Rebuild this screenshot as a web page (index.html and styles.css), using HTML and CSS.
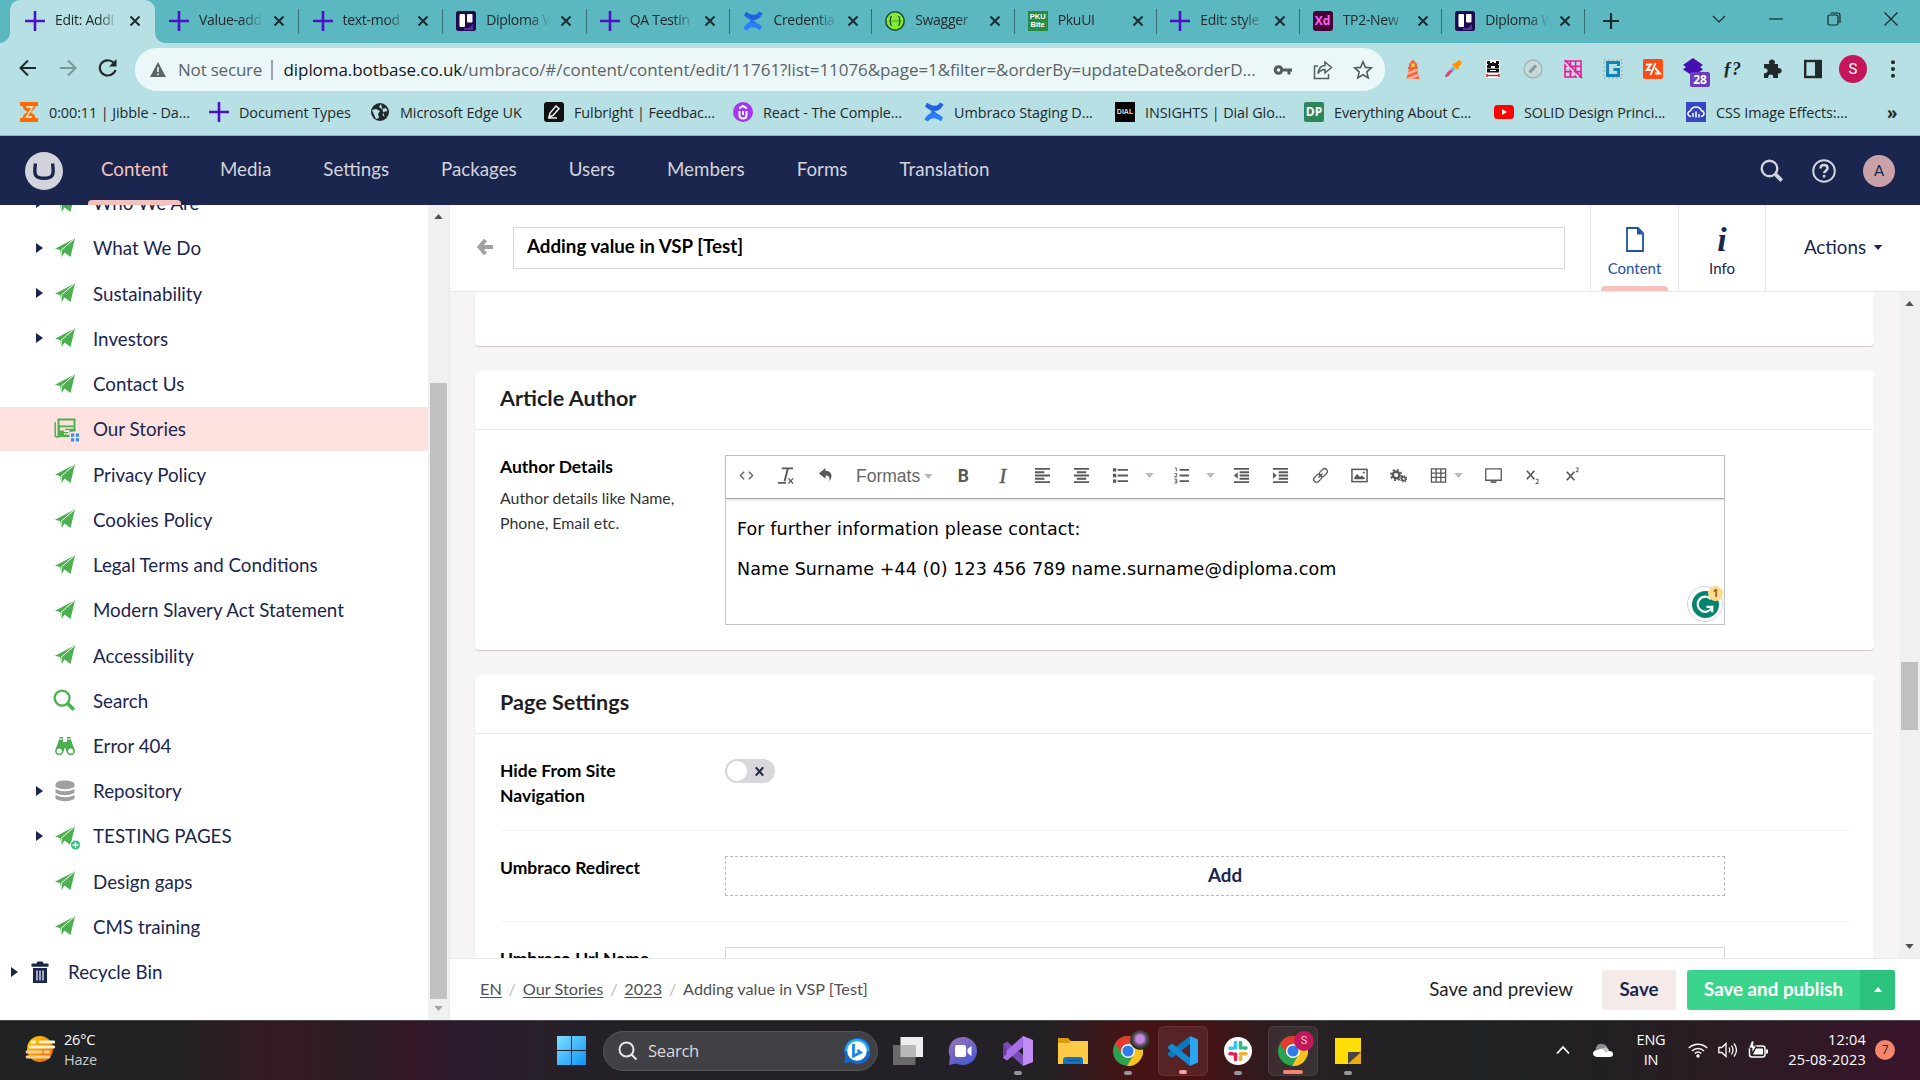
FILE: index.html
```html
<!DOCTYPE html>
<html lang="en">
<head>
<meta charset="utf-8">
<title>Edit: Adding value in VSP [Test]</title>
<link rel="stylesheet" href="styles.css">
</head>
<body>
<svg class="defs" aria-hidden="true">
  <symbol id="plus-logo" viewBox="0 0 20 20"><path d="M10 0v20M0 10h20" stroke="#4b12c4" stroke-width="2.6"/></symbol>
  <symbol id="x" viewBox="0 0 12 12"><path d="M1.5 1.5l9 9M10.500 1.500l-9 9" stroke="#1b2c30" stroke-width="2"/></symbol>
  <symbol id="trello" viewBox="0 0 20 20"><rect width="20" height="20" rx="2.500" fill="#1d0b4e"/><path d="M8 17l5 0 4-4v6H8z" fill="#5b2a93"/><rect x="3.500" y="3" width="5.500" height="13" rx="1" fill="#fff"/><rect x="11" y="3" width="5.500" height="8.500" rx="1" fill="#fff"/></symbol>
  <symbol id="confluence" viewBox="0 0 20 20"><path d="M1 4.500L3 .8c3 1.800 5 3 7.500 3S15 2.500 16 .5l3.500 1.700c-2 4.500-4.500 6.800-9 6.800-3.500 0-6.500-2-9.500-4.500z" fill="#1f63e0"/><path d="M19 15.500l-2 3.700c-3-1.800-5-3-7.500-3S5 17.500 4 19.500L.5 17.800C2.500 13.300 5 11 9.500 11c3.500 0 6.500 2 9.500 4.500z" fill="#2b7cff"/><path d="M5 6c4 2 7 4 10 8-4-3-7-3-10-1 3-2 3-4 0-7z" fill="#2770f0"/></symbol>
  <symbol id="plane" viewBox="0 0 22 22"><path d="M1 11.800L21 1.200 9.200 13.800 7.300 20.500 6 13z" fill="#4caf50"/><path d="M21 1.200L16.500 20l-6-4.500-3.200 5L8.500 14z" fill="#4caf50"/><path d="M20 2L7.200 13.200l-.2 7" stroke="#fff" stroke-width="1" fill="none"/></symbol>
  <symbol id="mag" viewBox="0 0 24 24"><circle cx="9.500" cy="9.500" r="7.800" fill="none" stroke="currentColor" stroke-width="2.400"/><path d="M15 15l2-1 6 6.300-2.600 2.600-6-6z" fill="currentColor"/></symbol>
  <symbol id="chrome" viewBox="0 0 30 30"><circle cx="15" cy="15" r="15" fill="#2ba24c"/><path d="M2 7.500A15 15 0 0 1 28 7.500L15 8.500 9 18z" fill="#e33b2e"/><path d="M28 7.500A15 15 0 0 1 14 30l7-12 0-8.500L15 7.500z" fill="#fcc31e"/><circle cx="15" cy="15" r="7" fill="#fff"/><circle cx="15" cy="15" r="5.600" fill="#2f7bea"/></symbol>
  <symbol id="caret" viewBox="0 0 10 6"><path d="M0 0h10L5 6z" fill="currentColor"/></symbol>
</svg>

<header class="browser">
  <div class="tabstrip">
    <div class="tab active"><svg class="fav"><use href="#plus-logo"/></svg><span>Edit: Addi</span><svg class="cl"><use href="#x"/></svg></div>
    <div class="tab"><svg class="fav"><use href="#plus-logo"/></svg><span>Value-add</span><svg class="cl"><use href="#x"/></svg></div>
    <div class="tab"><svg class="fav"><use href="#plus-logo"/></svg><span>text-mod</span><svg class="cl"><use href="#x"/></svg></div>
    <div class="tab"><svg class="fav"><use href="#trello"/></svg><span>Diploma W</span><svg class="cl"><use href="#x"/></svg></div>
    <div class="tab"><svg class="fav"><use href="#plus-logo"/></svg><span>QA Testin</span><svg class="cl"><use href="#x"/></svg></div>
    <div class="tab sixth"><svg class="fav"><use href="#confluence"/></svg><span>Credentia</span><svg class="cl"><use href="#x"/></svg></div>
    <div class="tab late"><svg class="fav" viewBox="0 0 20 20"><circle cx="10" cy="10" r="9.200" fill="#85ea2d" stroke="#1c4a3a" stroke-width="1.500"/><path d="M7 5.500q-2 0-1.500 2.500T4 10q2 0 1.500 2T7 14.500M13 5.500q2 0 1.500 2.500T16 10q-2 0-1.500 2t-1.500 2.500M7.500 10h1M9.500 10h1M11.500 10h1" fill="none" stroke="#1c4a3a" stroke-width="1.200"/></svg><span>Swagger</span><svg class="cl"><use href="#x"/></svg></div>
    <div class="tab late"><i class="fav pku">PKU<br>Bite</i><span>PkuUI</span><svg class="cl"><use href="#x"/></svg></div>
    <div class="tab late"><svg class="fav"><use href="#plus-logo"/></svg><span>Edit: style</span><svg class="cl"><use href="#x"/></svg></div>
    <div class="tab late"><i class="fav xd">Xd</i><span>TP2-New</span><svg class="cl"><use href="#x"/></svg></div>
    <div class="tab late"><svg class="fav"><use href="#trello"/></svg><span>Diploma W</span><svg class="cl"><use href="#x"/></svg></div>
    <svg class="newtab" viewBox="0 0 16 16"><path d="M8 0v16M0 8h16" stroke="#1b2c30" stroke-width="2.200"/></svg>
    <div class="winctl">
      <svg viewBox="0 0 14 14"><path d="M1 4l6 6 6-6"/></svg>
      <svg viewBox="0 0 14 14"><path d="M0 7h14"/></svg>
      <svg viewBox="0 0 14 14"><rect x="1" y="3" width="10" height="10" rx="1.500"/><path d="M3.500 1H11q2 0 2 2v8"/></svg>
      <svg viewBox="0 0 14 14"><path d="M.5.5l13 13M13.500.5l-13 13"/></svg>
    </div>
  </div>

  <div class="toolbar">
    <div class="nav">
      <svg viewBox="0 0 20 20"><path d="M18 10H3M10 2.500L2.500 10l7.500 7.500" fill="none" stroke="#22292b" stroke-width="2"/></svg>
      <svg viewBox="0 0 20 20" class="dim"><path d="M2 10h15M10 2.500l7.500 7.500-7.500 7.500" fill="none" stroke="#22292b" stroke-width="2"/></svg>
      <svg viewBox="0 0 20 20"><path d="M17.500 12A8 7.600 0 1 1 15.500 4.500" fill="none" stroke="#22292b" stroke-width="2.200"/><path d="M18.500 1v7.500H11z" fill="#22292b"/></svg>
    </div>
    <div class="omnibox">
      <svg class="warn" viewBox="0 0 16 15"><path d="M8 0l8 15H0z" fill="#5b6467"/><path d="M8 5v5M8 11.500v1.700" stroke="#ebf7f8" stroke-width="1.600"/></svg>
      <span class="ns">Not secure</span><i class="bar"></i>
      <span class="url"><b>diploma.botbase.co.uk</b>/umbraco/#/content/content/edit/11761?list=11076&amp;page=1&amp;filter=&amp;orderBy=updateDate&amp;orderD...</span>
      <div class="oi">
        <svg viewBox="0 0 20 20"><circle cx="5.500" cy="10" r="3.300" fill="none" stroke="#545c5f" stroke-width="3"/><path d="M9 10h10M16 10v4.500" stroke="#545c5f" stroke-width="3"/></svg>
        <svg viewBox="0 0 20 20"><path d="M5 6H1.500v12.500h14V14M12 2l6.500 5.500L12 13V9.500c-3 0-5 1-7 4 .5-5 3-7.800 7-8z" fill="none" stroke="#545c5f" stroke-width="1.500"/></svg>
        <svg viewBox="0 0 20 20"><path d="M10 1.800l2.400 5.600 6 .5-4.600 4 1.400 6L10 14.700 4.800 17.900l1.400-6-4.600-4 6-.5z" fill="none" stroke="#545c5f" stroke-width="1.600"/></svg>
      </div>
    </div>
    <div class="exts">
      <svg viewBox="0 0 20 20"><path d="M6 5l4-4.500L14 5v3h1v2h-1l2.500 10h-13L6 10H5V8h1z" fill="#f4633a"/><rect x="8.500" y="4.500" width="3" height="3.500" fill="#ffe14d"/><path d="M5.500 13l8-3.500.6 2.500-9.400 4zM4 19l11-4.500.6 2.500-6 3H4z" fill="#ffb199"/></svg>
      <svg viewBox="0 0 20 20"><path d="M2 18l1.500-4L10 7.500l2.500 2.500L6 16.500z" fill="#6fb7e8"/><path d="M2 18l1-3 3.500 1.800z" fill="#e0265e"/><path d="M4 14l3-3 3 1-5 5z" fill="#ef3d78"/><path d="M9 5.500l1.500-1.500 1 .8L14.500 2q2-1.500 3.500 0t0 3.500L15 8.500l.8 1L14.500 11z" fill="#ff9500"/></svg>
      <svg viewBox="0 0 20 20"><rect x="3" y="1" width="14" height="18" fill="#fff"/><path d="M4 2h3v2h2V3h2v1h2V2h3v3h-1v1h1v3h-4V7H8v2H4V6h1V5H4zM4 9.500h12v4H4z" fill="#111"/><path d="M7 11.500h6" stroke="#fff"/><path d="M4 16.500h12M4 15v3M16 15v3" stroke="#e21b1b" stroke-width="1.500"/></svg>
      <svg viewBox="0 0 20 20"><circle cx="10" cy="10" r="9" fill="#c5dadd" stroke="#9fb4b8" stroke-width="1.400"/><path d="M6.500 13.500l6.500-7" stroke="#8b979a" stroke-width="3"/></svg>
      <svg viewBox="0 0 20 20"><path d="M2 2h16v16H2zM2 7.300h16M2 12.600h16M7.300 2v16M12.600 2v16" fill="none" stroke="#f0189a" stroke-width="1.600"/><path d="M1 3l15 16" stroke="#b7e0e4" stroke-width="1.500"/><path d="M2 1l17 18" stroke="#f0189a" stroke-width="1.800"/></svg>
      <svg viewBox="0 0 20 20"><path d="M1 1h18v18H1z" fill="none" stroke="#9aa7ad" stroke-dasharray="2 2"/><path d="M15.500 7V3.500H4.500v13h11v-6h-5" fill="none" stroke="#1683b5" stroke-width="3"/></svg>
      <svg viewBox="0 0 20 20"><rect width="20" height="20" rx="2" fill="#ff4a11"/><path d="M3 5.500h5L3.500 11H8M12.500 4l-5 12M12 9l5 5.500h-5" fill="none" stroke="#fff" stroke-width="1.900"/></svg>
      <div class="bdg"><svg viewBox="0 0 20 20"><path d="M10 0l10 7-3 2 3 2.500L10 18 0 11.500 3 9 0 7z" fill="#4510b2"/></svg><em>28</em></div>
      <span class="fq">ƒ?</span>
      <svg viewBox="0 0 20 20"><path d="M1 5h5.500a3 2.800 0 1 1 4.800 0H15v4.300a2.700 2.700 0 1 1 0 5V19h-5a2.500 2.500 0 1 0-4.500 0H1v-5a2.500 2.500 0 1 0 0-4.500z" fill="#22292b"/></svg>
      <svg viewBox="0 0 20 20"><rect x="2.200" y="2" width="15.600" height="16" fill="none" stroke="#22292b" stroke-width="2.400"/><path d="M12 2h6v16h-6z" fill="#22292b"/></svg>
      <i class="me">S</i>
      <svg viewBox="0 0 20 20"><g fill="#22292b"><circle cx="10" cy="3.300" r="2"/><circle cx="10" cy="10" r="2"/><circle cx="10" cy="16.700" r="2"/></g></svg>
    </div>
  </div>

  <div class="bookmarks">
    <div><svg viewBox="0 0 20 20"><path d="M1 0h18v4h-2.500c-.5 3-2.500 4.500-5 6 2.500 1.500 4.500 3 5 6H19v4H1v-4h2.500c.5-3 2.500-4.500 5-6-2.500-1.500-4.500-3-5-6H1z" fill="#ff6b00"/><path d="M7 5h6.500L7.500 15H13" fill="none" stroke="#ffd9ba" stroke-width="1.800"/></svg><span>0:00:11 | Jibble - Da...</span></div>
    <div><svg><use href="#plus-logo"/></svg><span>Document Types</span></div>
    <div><svg viewBox="0 0 20 20"><circle cx="10" cy="10" r="9" fill="#22292b"/><path d="M2 8l4-1 4 2-2 3 1 4-3 1M11 2l-2 3 3 2 4-1 1.500 3-4 1-1 3 2 2" fill="#b7e0e4"/></svg><span>Microsoft Edge UK</span></div>
    <div><svg viewBox="0 0 20 20"><rect width="20" height="20" rx="3" fill="#111"/><path d="M5 15l1-4 6-7 3 2.500-6 7zM4 16h9" fill="none" stroke="#eee" stroke-width="1.500"/></svg><span>Fulbright | Feedbac...</span></div>
    <div><svg viewBox="0 0 20 20"><circle cx="10" cy="10" r="10" fill="#a435f0"/><path d="M6.500 9v4q0 3.500 3.500 3.500t3.500-3.500V9M10 9v4M6 6.500L10 4l4 2.500" fill="none" stroke="#fff" stroke-width="2"/></svg><span>React - The Comple...</span></div>
    <div><svg><use href="#confluence"/></svg><span>Umbraco Staging D...</span></div>
    <div><i class="bi dial">DIAL</i><span>INSIGHTS | Dial Glo...</span></div>
    <div><i class="bi dp">DP</i><span>Everything About C...</span></div>
    <div><svg viewBox="0 0 20 20"><rect y="3" width="20" height="14" rx="3.500" fill="#f00"/><path d="M8 7l5 3-5 3z" fill="#fff"/></svg><span>SOLID Design Princi...</span></div>
    <div><svg viewBox="0 0 20 20"><rect width="20" height="20" fill="#3448c5"/><path d="M5 14.500q-3.500-.5-3-3.500.5-2 2.500-2.300Q6 5 10 5t5.500 3.700q2.500.3 2.500 2.800t-3 3M7 15v-4M10 15.500V9.500M13 15.500V12" fill="none" stroke="#fff" stroke-width="1.500"/></svg><span>CSS Image Effects:...</span></div>
    <b>»</b>
  </div>
</header>

<nav class="appbar">
  <svg class="ulogo" viewBox="0 0 38 38"><circle cx="19" cy="19" r="19" fill="#d2d4dc"/><path d="M10.500 11.500c-1 6-1 10 .5 12.200 1.200 2 4 2.600 8 2.600s6.800-.6 8-2.600c1.500-2.200 1.500-6.200.5-12.200" fill="none" stroke="#1b264f" stroke-width="3.400"/></svg>
  <a class="on">Content</a><a>Media</a><a>Settings</a><a>Packages</a><a>Users</a><a>Members</a><a>Forms</a><a>Translation</a>
  <div class="tools">
    <svg class="s"><use href="#mag"/></svg>
    <svg viewBox="0 0 24 24"><circle cx="12" cy="12" r="10.800" fill="none" stroke="#d2d4dc" stroke-width="2"/><path d="M8.500 9.500q0-3.500 3.500-3.500t3.500 3.200c0 2.500-3.300 2.500-3.300 5M12.100 16v2.400" fill="none" stroke="#d2d4dc" stroke-width="2.500"/></svg>
    <i>A</i>
  </div>
</nav>

<main class="app">
  <aside class="tree">
    <ul>
      <li class="has"><svg><use href="#plane"/></svg>Who We Are</li>
      <li class="has"><svg><use href="#plane"/></svg>What We Do</li>
      <li class="has"><svg><use href="#plane"/></svg>Sustainability</li>
      <li class="has"><svg><use href="#plane"/></svg>Investors</li>
      <li><svg><use href="#plane"/></svg>Contact Us</li>
      <li class="sel"><svg class="ov" viewBox="0 0 22 22"><path d="M4.500 1.500h16v11h-4v5.500H4.500z" fill="#ffe2e0" stroke="#4caf50" stroke-width="2"/><path d="M1.200 4v13.500q0 1.500 1.500 1.500H5" fill="none" stroke="#4caf50" stroke-width="1.500"/><path d="M4 7.500h17v1.700H4zM4 8.500h1.800v4h4v1.500h4.500v1.300H10v1.200h3V19H4zM11 10.800h9v1.200h-9z" fill="#4caf50"/><path d="M15.500 14h11v11h-11z" fill="#ffe2e0"/><g fill="#2f8cf0"><path d="M17 15.500h3.200v3.200H17zM21.800 15.500H25v3.200h-3.200zM17 20.200h3.200v3.200H17zM21.800 20.200H25v3.200h-3.200z"/></g></svg>Our Stories</li>
      <li><svg><use href="#plane"/></svg>Privacy Policy</li>
      <li><svg><use href="#plane"/></svg>Cookies Policy</li>
      <li><svg><use href="#plane"/></svg>Legal Terms and Conditions</li>
      <li><svg><use href="#plane"/></svg>Modern Slavery Act Statement</li>
      <li><svg><use href="#plane"/></svg>Accessibility</li>
      <li><svg class="green"><use href="#mag"/></svg>Search</li>
      <li><svg viewBox="0 0 22 22"><g fill="#4caf50"><path d="M5 4.500h4V7h4V4.500h4l3 9H2z"/><rect x="5.500" y="2" width="3.500" height="1.500"/><rect x="13" y="2" width="3.500" height="1.500"/><path d="M2 12h8v4H2zM12 12h8v4h-8z"/></g><g fill="#fff" stroke="#4caf50" stroke-width="1.600"><circle cx="5.300" cy="16" r="3.400"/><circle cx="16.700" cy="16" r="3.400"/></g></svg>Error 404</li>
      <li class="has"><svg viewBox="0 0 22 22"><g fill="#a0a0a0"><ellipse cx="11" cy="4" rx="9.500" ry="3.500"/><path d="M1.500 4h19v3q-9.500 4.500-19 0zM1.500 9q9.500 4.500 19 0v4q-9.500 4.500-19 0zM1.500 15q9.500 4.500 19 0v4q-9.500 4.500-19 0z"/></g></svg>Repository</li>
      <li class="has"><svg class="ov" viewBox="0 0 22 22"><use href="#plane" width="22" height="22"/><circle cx="21.500" cy="20" r="5" fill="#2bc37c" stroke="#fff"/><path d="M21.500 17v6M18.500 20h6" stroke="#fff" stroke-width="1.400"/></svg>TESTING PAGES</li>
      <li><svg><use href="#plane"/></svg>Design gaps</li>
      <li><svg><use href="#plane"/></svg>CMS training</li>
      <li class="has root"><svg viewBox="0 0 22 22"><path d="M2.500 2.500h5L8.500.5h5l1 2h5v3.300h-17z" fill="#1b264f"/><path d="M4 7h14v15H4z" fill="#1b264f"/><path d="M8 9.500v10M11 9.500v10M14 9.500v10" stroke="#fff" stroke-width="1.200"/></svg>Recycle Bin</li>
    </ul>
  </aside>
  <div class="sb left"><svg class="up"><use href="#caret"/></svg><i></i><svg class="dn"><use href="#caret"/></svg></div>

  <section class="editor">
    <div class="ehead">
      <svg class="back" viewBox="0 0 16 16"><path d="M8.500 1L2.500 8l6 7M3 8h13" fill="none" stroke="#a3a1a4" stroke-width="4"/></svg>
      <div class="title">Adding value in VSP [Test]</div>
      <div class="etab on"><svg viewBox="0 0 18 25"><path d="M1 1h11l5 5v18H1z" fill="none" stroke="#2152a3" stroke-width="1.800"/><path d="M11 1v6.500h6z" fill="#2152a3"/></svg>Content</div>
      <div class="etab"><i>i</i>Info</div>
      <div class="actions">Actions <svg><use href="#caret"/></svg></div>
    </div>
    <div class="ebody">
      <div class="cards">
        <div class="card first"></div>
        <div class="card">
          <h3>Article Author</h3>
          <div class="prop author">
            <div class="lbl">Author Details<small>Author details like Name, Phone, Email etc.</small></div>
            <div class="rte">
              <div class="rtebar">
                <svg viewBox="0 0 18 18"><path d="M6.500 5L2.500 9l4 4M11.500 5l4 4-4 4"/></svg>
                <svg viewBox="0 0 18 18"><path d="M5 1.500h12M11.500 1.500L8 15M1 16.800h8.500" stroke-width="2"/><path d="M12 12l5 5.500M17 12l-5 5.500"/></svg>
                <svg viewBox="0 0 18 18"><path d="M9 1L2 7l7 5.500V9c3.500 0 5 2 4 6 4-4.500 3-11-4-11z" class="f"/></svg>
                <span class="fmt">Formats<svg><use href="#caret"/></svg></span>
                <b>B</b><b class="it">I</b>
                <svg viewBox="0 0 18 18"><path d="M1 2h16M1 5.500h10M1 9h16M1 12.500h10M1 16h16" stroke-width="2"/></svg>
                <svg viewBox="0 0 18 18"><path d="M1 2h16M4 5.500h10M1 9h16M4 12.500h10M1 16h16" stroke-width="2"/></svg>
                <span class="sp"><svg viewBox="0 0 18 18"><path d="M6 3h11M6 9h11M6 15h11" stroke-width="2"/><path d="M1 3h3.500M1 9h3.500M1 15h3.500" stroke-width="3.500"/></svg><svg class="c"><use href="#caret"/></svg></span>
                <span class="sp"><svg viewBox="0 0 18 18"><path d="M7 3h10M7 9h10M7 15h10" stroke-width="2"/><path d="M2 1h1.500v3.500M1.500 7h2.500v2l-2.500 1.500h3M1.500 13H4v4H1.500M2 15h2" stroke-width="1"/></svg><svg class="c"><use href="#caret"/></svg></span>
                <svg viewBox="0 0 18 18"><path d="M1 2h16M7 5.500h10M7 9h10M7 12.500h10M1 16h16" stroke-width="2"/><path d="M5 5.500v7L1 9z" class="f"/></svg>
                <svg viewBox="0 0 18 18"><path d="M1 2h16M7 5.500h10M7 9h10M7 12.500h10M1 16h16" stroke-width="2"/><path d="M1 5.500v7L5 9z" class="f"/></svg>
                <svg viewBox="0 0 18 18"><g transform="rotate(-45 9 9)"><rect x="0" y="6" width="9.500" height="6" rx="3"/><rect x="8.500" y="6" width="9.500" height="6" rx="3"/><path d="M6 9h6"/></g></svg>
                <svg viewBox="0 0 18 18"><rect x="1" y="2.500" width="16" height="13" stroke-width="1.600"/><path d="M3.500 13V11l3-3.500 3 3 2-1.500 3 2.500V13zM12.500 5h2v2h-2z" class="f"/></svg>
                <svg viewBox="0 0 18 18"><circle cx="6.500" cy="8.500" r="3.500" stroke-width="2.600"/><circle cx="6.500" cy="8.500" r="5.600" stroke-dasharray="2.200 2.200" stroke-width="1.800"/><circle cx="14.500" cy="12.500" r="2" stroke-width="1.700"/><circle cx="14.500" cy="12.500" r="3.200" stroke-dasharray="1.200 1.300"/></svg>
                <span class="sp tb"><svg viewBox="0 0 18 18"><path d="M1.500 2h15v14h-15zM1.500 6.500h15M1.500 11h15M6.500 2v14M11.500 2v14" stroke-width="1.400"/></svg><svg class="c"><use href="#caret"/></svg></span>
                <svg viewBox="0 0 18 18"><path d="M.8 2h16.400v12H.8z" stroke-width="1.400"/><path d="M5.500 15h7l-1 2h-5z" class="f"/></svg>
                <svg viewBox="0 0 18 18"><path d="M3 4l8 9M11 4l-8 9" stroke-width="1.800"/><path d="M12.500 13h2.500v2l-2.500 2.500h3" stroke-width="1"/></svg>
                <svg viewBox="0 0 18 18"><path d="M3 5l8 9M11 5l-8 9" stroke-width="1.800"/><path d="M12.500 1H15v2l-2.500 2h3" stroke-width="1"/></svg>
              </div>
              <div class="rtebody"><p>For further information please contact:</p><p>Name Surname +44 (0) 123 456 789 name.surname@diploma.com</p>
                <div class="gram"><svg viewBox="0 0 28 28"><circle cx="14" cy="14" r="14" fill="#04836f"/><path d="M19.500 8.500A7.800 7.800 0 1 0 21 16.500h-6M21 22v-5.500" fill="none" stroke="#fff" stroke-width="2.300"/></svg><em>1</em></div>
              </div>
            </div>
          </div>
        </div>
        <div class="card settings">
          <h3>Page Settings</h3>
          <div class="prop hide"><div class="lbl">Hide From Site Navigation</div><div class="toggle"><i></i><svg viewBox="0 0 12 12"><path d="M2 1.500l8 9M10 1.500l-8 9" stroke="#1b264f" stroke-width="2.300"/></svg></div></div>
          <div class="prop"><div class="lbl">Umbraco Redirect</div><div class="add">Add</div></div>
          <div class="prop"><div class="lbl">Umbraco Url Name</div><div class="input"></div></div>
        </div>
      </div>
      <div class="sb right"><svg class="up"><use href="#caret"/></svg><i></i><svg class="dn"><use href="#caret"/></svg></div>
    </div>
    <footer class="efoot">
      <div class="crumbs"><u>EN</u><s>/</s><u>Our Stories</u><s>/</s><u>2023</u><s>/</s><span>Adding value in VSP [Test]</span></div>
      <span class="prev">Save and preview</span>
      <button class="save">Save</button>
      <div class="pub"><b>Save and publish</b><i><svg><use href="#caret"/></svg></i></div>
    </footer>
  </section>
</main>

<div class="taskbar">
  <div class="weather"><svg viewBox="0 0 30 27"><defs><linearGradient id="sun" x1="0" y1="0" x2="1" y2="1"><stop offset="0" stop-color="#ffd200"/><stop offset="1" stop-color="#ea5d0c"/></linearGradient></defs><circle cx="15" cy="13" r="13" fill="url(#sun)"/><g stroke-width="2.800" stroke-linecap="round"><path d="M7 6h3M15 6h14M5 11h24" stroke="#fff2cf"/><path d="M2 16h14M20 16h4M2 21h22" stroke="#f3cf93"/></g></svg><div>26°C<small>Haze</small></div></div>
  <div class="apps">
    <svg class="win" viewBox="0 0 29 29"><defs><linearGradient id="w" x1="0" y1="0" x2="1" y2="1"><stop offset="0" stop-color="#7ee0ff"/><stop offset="1" stop-color="#0c93f5"/></linearGradient></defs><path d="M0 0h14v14H0zM15 0h14v14H15zM0 15h14v14H0zM15 15h14v14H15z" fill="url(#w)"/></svg>
    <div class="search"><svg viewBox="0 0 20 20"><circle cx="8.500" cy="8.500" r="7" fill="none" stroke="#e6e6e6" stroke-width="2"/><path d="M13.500 13.500l5 5" stroke="#e6e6e6" stroke-width="2.200"/></svg><span>Search</span><svg class="bing" viewBox="0 0 26 26"><path d="M13 0a13 13 0 1 1-6 24L0 25l1.500-6A13 13 0 0 1 13 0z" fill="#1667cf"/><path d="M13 1a12 12 0 0 1 12 12H1A12 12 0 0 1 13 1z" fill="#2aaee6"/><circle cx="13" cy="13" r="9.800" fill="#fff"/><path d="M9.500 6v12l7-3.500-3-2.500" fill="none" stroke="#1b86e5" stroke-width="2.800"/></svg></div>
    <div class="ic"><svg viewBox="0 0 30 30"><rect x="7.500" y="1" width="22.500" height="20" fill="#eee"/><rect x="0" y="9" width="22.500" height="20" fill="#777" opacity=".85"/><path d="M7.500 9h15v12h-15z" fill="#b9b9b9"/></svg></div>
    <div class="ic"><svg viewBox="0 0 30 30"><defs><linearGradient id="ch" x1="0" y1="0" x2=".6" y2="1"><stop offset="0" stop-color="#9b72b8"/><stop offset="1" stop-color="#4e5bd0"/></linearGradient></defs><path d="M15 1a14 14 0 1 1-6.500 26.400L1 29l1-8A14 14 0 0 1 15 1z" fill="url(#ch)"/><rect x="7" y="9" width="11" height="12" rx="2" fill="#fff"/><path d="M19.500 13l4-3v10l-4-3z" fill="#fff"/></svg></div>
    <div class="ic run"><svg viewBox="0 0 30 30"><path d="M20 0l10 4v22l-10 4z" fill="#c08cf5"/><path d="M0 8l4-2.500L20 19v11L0 12z" fill="#7a4cb5"/><path d="M0 22l4 2.500L20 11V0L0 18z" fill="#a56ee6"/><path d="M0 8l3.500 4v6L0 22z" fill="#6a3fa3"/></svg></div>
    <div class="ic"><svg viewBox="0 0 30 30"><path d="M0 2h10l3 3v6H0z" fill="#d99a10"/><path d="M0 7h11l2-2h17v23H0z" fill="#fdca45"/><path d="M5 28v-4q0-3 3-3h14q3 0 3 3v4z" fill="#1273c4"/><path d="M9 24.500h12" stroke="#0a4d8e"/></svg></div>
    <div class="ic run"><svg><use href="#chrome"/></svg><i class="ava pic"></i></div>
    <div class="ic run hl pink"><svg viewBox="0 0 30 30"><path d="M22 0l8 3.500v23L22 30z" fill="#2aa5f2"/><path d="M22 0v8L4 22l-4-3v-2z" fill="#0d77bd"/><path d="M22 30v-8L4 7.500 0 10.500v2z" fill="#1589d1"/></svg></div>
    <div class="ic run"><svg viewBox="0 0 30 30"><circle cx="15" cy="15" r="14" fill="#fff"/><g stroke-width="3.600" stroke-linecap="round"><path d="M12.500 6.500v5.500M7 12.300h2.500" stroke="#36c5f0"/><path d="M17.500 6.500v5.500M20.500 12h2.500" stroke="#2eb67d"/><path d="M17.500 17.800h5.500M17.500 21v2.500" stroke="#ecb22e"/><path d="M7 17.800h2.500M12.500 18v5.500" stroke="#e01e5a"/></g></svg></div>
    <div class="ic run hl wide"><svg><use href="#chrome"/></svg><i class="ava">S</i></div>
    <div class="ic run"><svg viewBox="0 0 30 30"><path d="M2 2h26v14l-13 12H2z" fill="#ffdc06"/><path d="M15 28V16h13z" fill="#444"/><path d="M15 28l13-12v12z" fill="#eba913"/></svg></div>
  </div>
  <div class="tray">
    <svg class="chev" viewBox="0 0 14 14"><path d="M1 10.500L7 4l6 6.500" fill="none" stroke="#fff" stroke-width="1.800"/></svg>
    <svg class="cloud" viewBox="0 0 20 14"><path d="M4 9a5 5 0 0 1 5-8q4 0 5.500 4z" fill="#8d8d8f"/><path d="M4 14q-4-.5-4-4 1-3.500 5-3 2-2 5-1l6 2q4 0 4 3t-3 3z" fill="#fff"/><path d="M9 6q4-4 7 1l-3 3z" fill="#c9c9c9"/></svg>
    <div class="lang">ENG<br>IN</div>
    <svg class="wifi" viewBox="0 0 20 16"><path d="M.8 6a13 13 0 0 1 18.400 0M4 9a8.500 8.500 0 0 1 12 0M6.800 11.500a4.800 4.800 0 0 1 6.400 0" fill="none" stroke="#fff" stroke-width="1.500"/><circle cx="10" cy="14" r="1.700" fill="#fff"/></svg>
    <svg class="snd" viewBox="0 0 20 16"><path d="M.8 5.500h3L8 1.500v13l-4.200-4h-3zM11 5.500q1.500 2.500 0 5M13.500 3.500q3 4.500 0 9M16 1.500q5 6.500 0 13" fill="none" stroke="#fff" stroke-width="1.300"/></svg>
    <svg class="bat" viewBox="0 0 20 18"><rect x="1.500" y="5" width="15.500" height="11" rx="2.500" fill="none" stroke="#fff" stroke-width="1.500"/><path d="M8 7.500h7v6H5z" fill="#fff"/><path d="M18 8.500h2v4h-2z" fill="#fff"/><path d="M3.500 0L1 7h3v5l4.500-7h-3L6 0z" fill="#fff" stroke="#2a2024" stroke-width=".8"/></svg>
    <div class="clock">12:04<br>25-08-2023</div>
    <i class="cnt">7</i>
  </div>
</div>
</body>
</html>
```

FILE: styles.css
```css
* { box-sizing: border-box; }
body { margin: 0; width: 1920px; height: 1080px; overflow: hidden; display: flex; flex-direction: column; font-family: Lato, sans-serif; font-size: 18.75px; color: #1b264f; background: #fff; }
i, em { font-style: normal; }
svg { flex: none; display: block; }
.defs { position: absolute; width: 0; height: 0; }

/* browser chrome */
.browser { height: 136px; flex: none; background: #b7e0e4; border-bottom: 1px solid #8fb4b9; font-family: "Open Sans", "Noto Sans", sans-serif; color: #22292b; display: flex; flex-direction: column; }
.tabstrip { height: 43px; background: #5bb8c1; display: flex; padding-left: 12px; flex: none; }
.tab { width: 143.600px; display: flex; align-items: center; padding: 0 13px 2px; position: relative; height: 43px; flex: none; }
.tab.sixth { width: 141.800px; }
.tab.late { width: 142.500px; }
.tab .fav { width: 20px; height: 20px; margin-right: 10px; flex: none; }
.tab span { width: 66px; white-space: nowrap; font-size: 14px; letter-spacing: -.3px; line-height: 24px; margin-right: 8px; padding-bottom: 1px; flex: none; -webkit-mask-image: linear-gradient(90deg, #000 65%, transparent 98%); mask-image: linear-gradient(90deg, #000 65%, transparent 98%); }
.tab .cl { width: 12px; height: 12px; }
.tab:not(.active):after { content: ""; position: absolute; right: 0; top: 9px; width: 1px; height: 25px; background: #356f75; }
.tab.active + .tab:after { right: 1px; }
.tab.active { background: #b7e0e4; border-radius: 10px 10px 0 0; margin: 0 1px 0 -2px; padding-left: 15px; width: 145px; }
.tab.active:before, .tab.active:after { content: ""; position: absolute; bottom: 0; width: 10px; height: 10px; }
.tab.active:before { left: -10px; background: radial-gradient(circle at 0 0, transparent 9.500px, #b7e0e4 10px); }
.tab.active:after { right: -10px; background: radial-gradient(circle at 100% 0, transparent 9.500px, #b7e0e4 10px); }
.pku { background: #2a8a3e; color: #fff; font: bold 7.500px/8px "Liberation Sans", sans-serif; text-align: center; padding-top: 2px; }
.xd { background: #470137; color: #ff61f6; font: bold 12px/20px "Open Sans", sans-serif; border-radius: 3px; text-align: center; }
.newtab { width: 16px; height: 16px; margin: 13px 0 0 18px; }
.winctl { margin-left: auto; display: flex; height: 38px; align-items: center; gap: 43.500px; padding-right: 22px; }
.winctl svg { width: 14px; height: 14px; fill: none; stroke: #10282b; stroke-width: 1.200; }
.toolbar { height: 50px; display: flex; align-items: center; flex: none; }
.nav { display: flex; width: 135px; padding-left: 18px; gap: 20px; }
.nav svg { width: 20px; height: 20px; }
.dim { opacity: .4; }
.omnibox { width: 1250px; height: 43px; margin-top: 3px; border-radius: 22px; background: #ebf7f8; display: flex; align-items: center; font-size: 17px; color: #5b6467; padding-left: 15px; }
.omnibox .warn { width: 16px; height: 15px; margin-right: 12px; }
.ns { width: 83px; letter-spacing: -.2px; white-space: nowrap; }
.bar { width: 1.500px; height: 20px; background: #9aa6a9; margin: 0 11px 0 10px; }
.url { width: 989px; white-space: nowrap; letter-spacing: -.068px; }
.url b { font-weight: 400; color: #14191a; }
.oi { display: flex; gap: 20px; }
.oi svg { width: 20px; height: 20px; }
.exts { display: flex; margin: 2px 0 0 8px; align-items: center; }
.exts > * { width: 20px; height: 20px; margin: 0 10px; flex: none; }
.bdg { position: relative; }
.bdg svg { width: 20px; height: 20px; margin-top: -1px; }
.bdg em { position: absolute; left: 7px; top: 13px; width: 20px; height: 15px; background: #6b3cc4; color: #fff; border-radius: 2px; font: bold 12px/15px "Open Sans", sans-serif; text-align: center; }
.fq { font: italic bold 18px/20px "Liberation Serif", serif; white-space: nowrap; }
.exts .me { width: 28px; height: 28px; margin: 0 6px; border-radius: 50%; background: #c5165c; color: #fff; text-align: center; font: 15px/28px Roboto, sans-serif; }
.bookmarks { display: grid; grid-template-columns: 190px 161px 174px 189px 191px 191px 189px 190px 192px 201px auto; padding-left: 19px; height: 38px; align-items: center; font-size: 14.400px; letter-spacing: -.08px; }
.bookmarks div { display: flex; align-items: center; white-space: nowrap; gap: 10px; }
.bookmarks svg, .bi { width: 20px; height: 20px; }
.dial { background: #000; color: #ddd; font: bold 7px/19px "Liberation Sans", sans-serif; text-align: center; letter-spacing: 0; }
.dp { background: #2f855a; color: #fff; border-radius: 2px; font: bold 12px/20px "Open Sans", sans-serif; text-align: center; }
.bookmarks b { font-size: 17px; }

/* application bar */
.appbar { height: 69px; flex: none; background: #1b264f; display: flex; align-items: center; padding: 0 25px; color: #d2d4dc; }
.ulogo { width: 38px; height: 38px; margin-right: 12px; }
.appbar a { padding: 0 26px; line-height: 65px; height: 69px; position: relative; }
.appbar .on { color: #f5c1bc; }
.appbar .on:after { content: ""; position: absolute; left: 13px; right: 13px; bottom: 0; height: 5px; background: #f5c1bc; border-radius: 4px 4px 0 0; }
.tools { margin-left: auto; display: flex; align-items: center; gap: 28px; }
.tools svg { width: 24px; height: 24px; }
.tools i { width: 32px; height: 32px; border-radius: 50%; background: #c9a1a6; color: #1b264f; font-size: 15px; line-height: 31px; text-align: center; margin-left: -1px; }

.app { height: 815px; flex: none; display: flex; }
.tree { width: 428px; overflow: hidden; flex: none; }
.tree ul { list-style: none; margin: -23.800px 0 0; padding: 0; }
.tree li { height: 44px; margin-bottom: 1.240px; display: flex; align-items: center; padding: 0 0 1px 54px; position: relative; }
.tree li svg { width: 22px; height: 22px; margin-right: 17px; }
.tree li .ov { overflow: visible; }
.tree .sel { background: #ffe2e0; }
.tree .root { padding-left: 29px; }
.tree .has:before { content: ""; border-left: 7px solid #1b264f; border-top: 5px solid transparent; border-bottom: 5px solid transparent; margin: 0 11px 0 -18px; }
.tree li .green { color: #4caf50; margin-left: -1px; width: 23px; height: 23px; }

.sb { background: #f0f0f0; display: flex; flex-direction: column; align-items: center; flex: none; color: #505050; }
.sb svg { width: 9px; height: 5px; }
.sb .up { transform: scaleY(-1); }
.sb i { background: #c1c1c1; width: 17px; }
.left { width: 21px; }
.left .up { margin: 9px 0 164px; }
.left i { height: 616px; }
.left .dn { margin-top: 7px; color: #a3a3a3; }
.right { width: 21px; }
.right .up { margin: 9px 0 356px; }
.right i { height: 68px; }
.right .dn { margin-top: 214px; }

/* editor */
.editor { flex: 1; border-left: 1px solid #e9e9eb; display: flex; flex-direction: column; min-width: 0; }
.ehead { height: 87px; flex: none; border-bottom: 1px solid #e9e9eb; display: flex; align-items: center; padding-left: 27px; }
.back { width: 16px; height: 16px; margin: -3px 20px 0 0; }
.title { width: 1052px; height: 42px; border: 1px solid #d8d7d9; color: #000; padding: 0 13px; line-height: 36px; font-weight: 700; font-size: 18.750px; margin-right: 25px; }
.etab { width: 87px; height: 86px; border-left: 1px solid #e9e9eb; display: flex; flex-direction: column; align-items: center; font-size: 15px; position: relative; padding-top: 22px; flex: none; }
.etab svg { width: 18px; height: 25px; margin-bottom: 7px; }
.etab.on { color: #2152a3; width: 88px; }
.etab i { font: italic bold 34px/25px "Liberation Serif", serif; height: 25px; margin-bottom: 7px; }
.etab.on:after { content: ""; position: absolute; bottom: 0; left: 10px; width: 67px; height: 5px; border-radius: 4px 4px 0 0; background: #f5c1bc; }
.actions { border-left: 1px solid #e9e9eb; height: 86px; flex: 1; display: flex; align-items: center; justify-content: center; gap: 7px; padding: 0 0 3px 1px; }
.actions svg { width: 10px; height: 5px; margin-top: 2px; }
.ebody { height: 666px; overflow: hidden; background: #f6f4f5; display: flex; justify-content: space-between; flex: none; }
.cards { width: 1399px; margin-left: 25px; }
.card { background: #fff; border-radius: 4px; box-shadow: 0 1px 1px rgba(0,0,0,.16); height: 279px; margin-bottom: 25px; }
.first { height: 54px; border-radius: 0 0 4px 4px; }
.settings { height: 400px; }
.card h3 { margin: 0; height: 59px; border-bottom: 1px solid #e9e9eb; padding-left: 25px; font-size: 21.600px; line-height: 54px; color: #1f1f22; font-weight: 700; }
.prop { margin: 0 24px 0 25px; padding: 25px 0; display: flex; border-bottom: 1px solid #f3f3f5; }
.author { border: 0; }
.hide { height: 97px; }
.lbl { width: 190px; margin-right: 35px; line-height: 25px; color: #000; font-weight: 700; font-size: 17.500px; padding-right: 8px; margin-top: -1px; flex: none; }
.lbl small { display: block; font-weight: 400; font-size: 15.900px; color: #333; margin-top: 6px; }
.rte { width: 1000px; height: 170px; border: 1px solid #c4c4c4; }
.rtebar { height: 43px; border-bottom: 1px solid #a9a9a9; box-shadow: 0 1px 2px rgba(0,0,0,.15); display: flex; align-items: center; padding: 0 0 3px 12px; gap: 22.350px; font-family: "Liberation Sans", sans-serif; color: #595959; }
.rtebar > * { flex: none; }
.rtebar svg { width: 17px; height: 17px; fill: none; stroke: #595959; stroke-width: 1.300; }
.rtebar .f { fill: #595959; stroke: none; }
.rtebar b { width: 17px; text-align: center; font: 700 17.500px/20px Roboto, sans-serif; }
.rtebar .it { font: italic 20px/20px "Liberation Serif", serif; -webkit-text-stroke: .5px #595959; }
.fmt, .sp { display: flex; align-items: center; white-space: nowrap; }
.fmt { font-size: 17.500px; width: 76.500px; gap: 4px; color: #666; margin-top: 1px; }
.rtebar .fmt svg, .rtebar .sp .c { width: 9px; height: 5px; color: #b3bac0; stroke: none; flex: none; }
.sp { gap: 16px; width: 38px; }
.sp.tb { gap: 7px; width: 33px; }
.rtebody { position: relative; padding: 17px 11px; font-family: "DejaVu Sans", sans-serif; font-size: 17.500px; color: #000; }
.rtebody p { margin: 0 0 14px; line-height: 26px; letter-spacing: .095px; }
.gram { position: absolute; right: 1px; top: 87px; width: 36px; height: 36px; border-radius: 50%; border: 1px solid #d0d2e2; background: #fff; padding: 4px; }
.gram svg { width: 27px; height: 27px; }
.gram em { position: absolute; right: -1px; top: -1px; width: 15px; height: 15px; border-radius: 50%; background: #ffd98c; color: #8a5a00; font: bold 10px/15px "Open Sans", sans-serif; text-align: center; }
.toggle { width: 50px; height: 24px; border-radius: 12px; background: #d8d7d9; padding: 2px; display: flex; align-items: center; gap: 7px; }
.toggle i { width: 20px; height: 20px; border-radius: 50%; background: #fff; }
.toggle svg { width: 11px; height: 11px; }
.add { width: 1000px; height: 40px; border: 1px dashed #bbbabf; text-align: center; line-height: 36px; font-weight: 700; font-size: 18.750px; }
.input { width: 1000px; height: 40px; border: 1px solid #d8d7d9; }

.efoot { height: 62px; border-top: 1px solid #e9e9eb; display: flex; align-items: center; padding: 0 25px 0 30px; }
.crumbs { display: flex; font-size: 16.250px; color: #515054; margin-right: auto; padding-bottom: 3px; }
.crumbs s { text-decoration: none; color: #bbb; width: 21px; text-align: center; }
.crumbs u { text-underline-offset: 2px; }
.prev { color: #1f1f22; margin-right: 29px; padding-bottom: 3px; }
.save { width: 74px; height: 40px; border: 0; border-radius: 3px; background: #f4eae8; color: #1b264f; font: 700 18.750px Lato, sans-serif; padding: 0 0 2px; margin-right: 11px; }
.pub { display: flex; width: 208px; height: 40px; border-radius: 3px; overflow: hidden; background: #3bd48d; color: #fff; font-size: 18.750px; line-height: 37px; }
.pub b { width: 173px; text-align: center; }
.pub i { width: 35px; background: #2bc37c; display: flex; align-items: center; justify-content: center; }
.pub svg { width: 10px; height: 5px; transform: scaleY(-1); }

/* taskbar */
.taskbar { height: 60px; flex: none; border-top: 1px solid #48484a; display: flex; align-items: center; color: #fff; font-family: "Open Sans", "Noto Sans", sans-serif; font-size: 14.500px; letter-spacing: -.2px; line-height: 20px; background: linear-gradient(90deg, #202224 0, #202224 170px, #361924 275px, #2b1d25 360px, #351627 410px, #2a1b2e 460px, #271f29 540px, #222126 620px, #242125 1050px, #431416 1120px, #4b1011 1190px, #301b1e 1260px, #262123 1320px, #1f2224 1480px, #231f22 1620px, #2c1b24 1740px, #3a142b 1920px); }
.weather { display: flex; align-items: center; padding: 0 0 2px 25px; gap: 9px; width: 557px; }
.weather svg { width: 30px; height: 27px; }
.weather small { display: block; font-size: 14.500px; color: #ccc; }
.apps { display: flex; align-items: center; }
.win { width: 29px; height: 29px; margin-right: 17px; }
.search { width: 275px; height: 40px; border-radius: 20px; background: #414045; border: 1px solid #57565b; display: flex; align-items: center; padding: 0 7px 0 14px; margin-right: 3px; color: #d8d8d8; font-size: 16.700px; letter-spacing: -.3px; }
.search svg { width: 20px; height: 20px; margin-right: 10px; }
.search .bing { width: 26px; height: 26px; margin: 0 0 0 auto; }
.ic { width: 50px; height: 50px; margin-right: 5px; padding: 10px; position: relative; border-radius: 6px; }
.ic:nth-child(3) { margin-left: 2px; }
.ic svg { width: 30px; height: 30px; }
.run:after { content: ""; position: absolute; bottom: 1px; left: 21px; width: 8px; height: 4px; border-radius: 2px; background: #96949a; }
.hl { background: rgba(255,255,255,.08); border: 1px solid rgba(255,255,255,.07); padding: 9px; }
.pink:after { background: #ff9ba6; left: 20px; }
.wide:after { width: 20px; left: 14px; background: #f5866b; }
.ava { position: absolute; right: 3px; top: 4px; width: 20px; height: 20px; border-radius: 50%; background: #c2185b; font: 11px/20px Roboto, sans-serif; text-align: center; color: #f6c8da; }
.pic { background: radial-gradient(circle at 50% 45%, #c58ae0 25%, #5a4a5f 45%, #26311d 65%); }
.tray { margin-left: auto; display: flex; align-items: center; padding: 0 25px 2px 0; }
.chev { width: 14px; height: 14px; margin-right: 23px; }
.cloud { width: 20px; height: 14px; margin-right: 23px; }
.lang { text-align: center; width: 30px; margin-right: 22px; }
.wifi, .snd { width: 20px; height: 16px; margin-right: 10px; }
.bat { width: 20px; height: 18px; margin-right: 8px; }
.clock { text-align: right; width: 90px; margin-right: 9px; white-space: nowrap; letter-spacing: .22px; }
.cnt { width: 20px; height: 20px; border-radius: 50%; background: #f5866b; color: #222; font-size: 12px; text-align: center; }
```
